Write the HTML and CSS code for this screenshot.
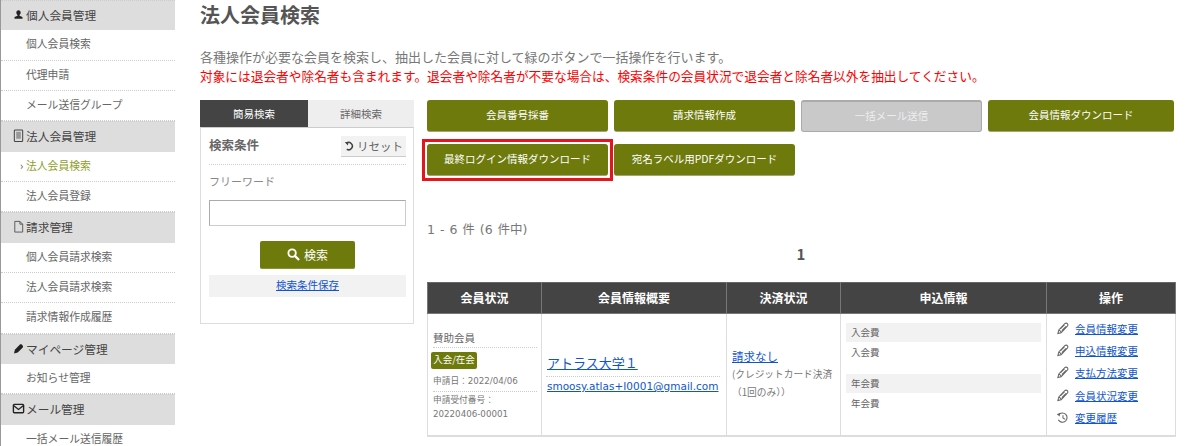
FILE: index.html
```html
<!DOCTYPE html>
<html lang="ja">
<head>
<meta charset="utf-8">
<title>法人会員検索</title>
<link rel="stylesheet" href="styles.css">
</head>
<body>
<svg width="0" height="0" class="defs">
  <symbol id="pen" viewBox="0 0 14 14"><path d="M2 12.500 3 8.500 9.500 1.800c.8-.8 2-.8 2.700 0s.7 1.900 0 2.700L5.500 11.500zM4.700 7.500l4.600-4.600M6.300 9.300l4.600-4.600M3 8.500c1 .2 2 1.500 2.500 3" fill="none" stroke="#666" stroke-width="1.100"/></symbol>
</svg>
<nav class="side">
  <div class="sh"><svg class="si" viewBox="-2 -2 18 18"><path d="M7 1c-2 0-3 1.500-3 3.300 0 1.500.7 2.700 1.600 3.300v1.200L1.500 10.500V13h11v-2.500L8.400 8.800V7.600C9.300 7 10 5.800 10 4.300 10 2.500 9 1 7 1z" fill="#222"/></svg>個人会員管理</div>
  <a class="si-row">個人会員検索</a>
  <a class="si-row">代理申請</a>
  <a class="si-row">メール送信グループ</a>
  <div class="sh"><svg class="si" viewBox="0 0 14 14"><rect x="2.500" y="1" width="9" height="12.500" rx="1" fill="none" stroke="#444" stroke-width="1.100"/><path d="M4.500 3h5v7.500h-5z" fill="#999"/></svg>法人会員管理</div>
  <a class="si-row cur">法人会員検索</a>
  <a class="si-row">法人会員登録</a>
  <div class="sh"><svg class="si" viewBox="0 0 14 14"><path d="M3 1.500h5.500L11.500 4.500v8.500H3zM8.500 1.500v3h3" fill="none" stroke="#555" stroke-width="1"/></svg>請求管理</div>
  <a class="si-row">個人会員請求検索</a>
  <a class="si-row">法人会員請求検索</a>
  <a class="si-row">請求情報作成履歴</a>
  <div class="sh"><svg class="si" viewBox="-1 -1 16 16"><path d="M1.500 13 2.500 8.500 8.500 2.500c.8-.8 2-.8 2.800 0l.7.700c.8.800.8 2 0 2.800L6 12z" fill="#222"/></svg>マイページ管理</div>
  <a class="si-row">お知らせ管理</a>
  <div class="sh"><svg class="si" viewBox="0 0 14 14"><rect x="1.500" y="2.500" width="11" height="9" rx="1" fill="none" stroke="#222" stroke-width="1.500"/><path d="M2 4l5 4 5-4" fill="none" stroke="#222" stroke-width="1.400"/></svg>メール管理</div>
  <a class="si-row">一括メール送信履歴</a>
</nav>
<main class="main">
  <h1 class="title">法人会員検索</h1>
  <p class="desc">各種操作が必要な会員を検索し、抽出した会員に対して緑のボタンで一括操作を行います。<br><span class="red">対象には退会者や除名者も含まれます。退会者や除名者が不要な場合は、検索条件の会員状況で退会者と除名者以外を抽出してください。</span></p>
  <div class="cols">
    <section class="search">
      <div class="tabs"><div class="tab on">簡易検索</div><div class="tab">詳細検索</div></div>
      <div class="panel">
        <div class="phead"><span class="ptitle">検索条件</span><span class="reset"><svg class="ri" viewBox="0 0 12 12"><path d="M2.500 2.500A4 4 0 1 1 3 9" fill="none" stroke="#444" stroke-width="1.700"/><path d="M.8 1.200 5 1 4.200 5z" fill="#444"/></svg>リセット</span></div>
        <div class="flabel">フリーワード</div>
        <div class="finput"></div>
        <div class="sbwrap"><span class="sbtn"><svg class="mag" viewBox="0 0 14 14"><circle cx="5.500" cy="5.500" r="4" fill="none" stroke="#fff" stroke-width="2"/><path d="M8.500 8.500 13 13" stroke="#fff" stroke-width="2.400"/></svg>検索</span></div>
        <div class="save"><a class="lnk">検索条件保存</a></div>
      </div>
    </section>
    <section class="right">
      <div class="btns">
        <a class="btn">会員番号採番</a>
        <a class="btn">請求情報作成</a>
        <a class="btn off">一括メール送信</a>
        <a class="btn">会員情報ダウンロード</a>
        <a class="btn mark">最終ログイン情報ダウンロード</a>
        <a class="btn">宛名ラベル用PDFダウンロード</a>
      </div>
      <div class="count">1 - 6 件 (6 件中)</div>
      <div class="pager">1</div>
      <table class="tbl">
        <colgroup><col class="c1"><col class="c2"><col class="c3"><col class="c4"><col class="c5"></colgroup>
        <thead><tr><th>会員状況</th><th>会員情報概要</th><th>決済状況</th><th>申込情報</th><th>操作</th></tr></thead>
        <tbody><tr>
          <td class="d1">
            <div class="kind">賛助会員</div>
            <div><span class="badge">入会/在会</span></div>
            <div class="meta dot">申請日：2022/04/06</div>
            <div class="meta">申請受付番号：<br>20220406-00001</div>
          </td>
          <td class="d2">
            <div class="cname"><a class="lnk">アトラス大学１</a></div>
            <div class="mail"><a class="lnk">smoosy.atlas+I0001@gmail.com</a></div>
          </td>
          <td class="d3">
            <a class="lnk pay">請求なし</a>
            <div class="paynote">(クレジットカード決済<br>（1回のみ））</div>
          </td>
          <td class="d4">
            <div class="fee">入会費</div><div class="feev">入会費</div>
            <div class="fee">年会費</div><div class="feev">年会費</div>
          </td>
          <td class="d5">
            <div class="op"><svg class="oi"><use href="#pen"/></svg><a class="lnk">会員情報変更</a></div>
            <div class="op"><svg class="oi"><use href="#pen"/></svg><a class="lnk">申込情報変更</a></div>
            <div class="op"><svg class="oi"><use href="#pen"/></svg><a class="lnk">支払方法変更</a></div>
            <div class="op"><svg class="oi"><use href="#pen"/></svg><a class="lnk">会員状況変更</a></div>
            <div class="op"><svg class="oi" viewBox="0 0 14 14"><path d="M3 4A5 5 0 1 1 2.500 9.500" fill="none" stroke="#666" stroke-width="1.200"/><path d="M.8 3.500 4.500 2 4 6z" fill="#666"/><path d="M7.500 4.500V7.500L10 9" fill="none" stroke="#666" stroke-width="1.100"/></svg><a class="lnk">変更履歴</a></div>
          </td>
        </tr></tbody>
      </table>
    </section>
  </div>
</main>
</body>
</html>
```
FILE: styles.css
```css
* { box-sizing: border-box; }
html, body { margin: 0; height: 446px; overflow: hidden; }
body {
  display: flex;
  background: #fff;
  color: #666;
  font-family: "Noto Sans CJK JP", "Liberation Sans", sans-serif;
  font-size: 12px;
}
.defs { position: absolute; }

.side {
  flex: 0 0 175px;
  border-left: 1px solid #999;
  height: 446px;
  overflow: hidden;
}
.sh {
  display: flex;
  align-items: center;
  height: 30.33px;
  background: #ddd;
  color: #444;
  font-size: 11.700px;
  padding: 0 0 2px 11px;
  border-top: 1px dotted #ccc;
}
.si { width: 13px; height: 13px; margin-right: 1px; flex: none; }
.si-row {
  display: block;
  height: 30.33px;
  line-height: 26px;
  padding-left: 25px;
  font-size: 10.800px;
  color: #666;
  border-bottom: 1px dotted #ccc;
}
.cur { color: #8f9e2a; position: relative; }
.cur::before {
  content: "›";
  position: absolute;
  left: 19px;
  color: #555;
}

.main { flex: 1; padding-left: 25px; min-width: 0; }
.title {
  margin: 0;
  padding-top: 2px;
  height: 47px;
  font-size: 20px;
  line-height: 26px;
  color: #555;
  font-weight: 700;
}
.desc { margin: 0; font-size: 13px; line-height: 19px; color: #777; height: 53px; white-space: nowrap; }
.red { color: #f00; font-size: 12.700px; }

.cols { display: flex; align-items: flex-start; }
.search { flex: 0 0 214px; margin-right: 13px; }
.tabs { display: flex; height: 27px; }
.tab { flex: 1; text-align: center; line-height: 27px; font-size: 10.500px; background: #eee; color: #666; }
.tab.on { flex: 0 0 108px; background: #444; color: #fff; }
.panel { border: 1px solid #ddd; border-top-color: #ccc; height: 197px; padding: 8px 7px 0 8px; }
.phead { display: flex; justify-content: space-between; align-items: center; height: 21px; }
.ptitle { font-size: 12.500px; font-weight: 700; color: #666; padding-bottom: 4px; }
.reset {
  display: flex; align-items: center;
  height: 21px;
  width: 65px;
  justify-content: center;
  background: #f2f2f2;
  border-bottom: 1px solid #ccc;
  font-size: 11.500px;
  color: #666;
}
.ri { width: 11px; height: 11px; margin-right: 2px; }
.flabel { margin-top: 7px; padding-top: 8px; border-top: 1px dotted #ccc; font-size: 11px; line-height: 17px; color: #888; }
.finput { margin-top: 10px; height: 26px; border: 1px solid #aaa; border-bottom-color: #ccc; border-right-color: #ccc; }
.sbwrap { margin-top: 15px; display: flex; justify-content: center; }
.sbtn {
  display: flex; align-items: center; justify-content: center;
  width: 95px; height: 28px;
  background: #6e7a0c;
  border-bottom: 1px solid #8a9430;
  border-radius: 2px;
  color: #fff;
  font-size: 12px;
}
.mag { width: 13px; height: 13px; margin-right: 4px; }
.save { margin-top: 6px; height: 22px; line-height: 20px; background: #f2f2f2; text-align: center; font-size: 10.500px; }
.lnk { color: #1155cc; text-decoration: underline; }

.right { width: 748px; }
.btns { display: grid; grid-template-columns: 181px 181px 181px 186px; gap: 12px 6px; }
.btn {
  height: 32px;
  line-height: 30px;
  text-align: center;
  background: #6e7a0c;
  border-bottom: 1px solid #a0a67a;
  border-radius: 3px;
  color: #fff;
  font-size: 10.500px;
}
.off { background: #c9c9c9; border: 1px solid #aaa; border-top-width: 2px; color: #eee; line-height: 27px; }
.mark { position: relative; }
.mark::after {
  content: "";
  position: absolute;
  left: -5px; right: -5px; top: -5px; bottom: -6px;
  border: 3px solid #e8141c;
}
.count { margin-top: 45px; font-family: "DejaVu Sans", "Noto Sans CJK JP", sans-serif; font-size: 12.500px; word-spacing: 1px; line-height: 18px; color: #777; }
.pager { margin-top: 4px; height: 22px; text-align: center; font-size: 15px; font-weight: 700; line-height: 22px; color: #555; }
.tbl { margin-top: 17px; width: 748px; table-layout: fixed; border-collapse: collapse; }
.c1 { width: 114px; } .c2 { width: 185px; } .c3 { width: 114px; } .c4 { width: 206px; } .c5 { width: 129px; }
.tbl th {
  height: 31px;
  padding: 0 0 1px;
  background: #444;
  color: #fff;
  font-size: 12px;
  font-weight: 700;
  border: 1px solid #777;
  border-top-color: #666;
}
.tbl td { height: 122px; padding: 0; border: 1px solid #ddd; border-bottom-width: 2px; }
.d1 { padding: 0 4px 0 5px !important; vertical-align: top; }
.kind { margin-top: 14px; height: 20px; line-height: 20px; border-bottom: 1px dotted #ccc; font-size: 10.500px; }
.badge {
  display: block;
  width: 46px; height: 17px;
  margin: 4px 0 0 -2px;
  line-height: 15px;
  text-align: center;
  background: #6e7a0c;
  border-radius: 2px;
  color: #fff;
  font-size: 9.500px;
}
.meta { font-family: "DejaVu Sans", "Noto Sans CJK JP", sans-serif; font-size: 8.700px; line-height: 14px; color: #777; }
.meta.dot { margin-top: 3px; padding: 2px 0 3px; border-bottom: 1px dotted #ccc; }
.meta:last-child { padding-top: 1px; }
.d2 { padding: 34px 6px 0 4px !important; vertical-align: top; }
.d2 .cname { padding-left: 1px; }
.cname { font-size: 13px; line-height: 20px; height: 29px; padding-top: 5px; border-bottom: 1px dotted #ccc; }
.mail { padding-left: 1px; font-family: "DejaVu Sans", "Noto Sans CJK JP", sans-serif; font-size: 10.500px; line-height: 18px; white-space: nowrap; }
.d3 { padding: 0 0 0 5px !important; vertical-align: middle; font-size: 9.700px; }
.pay { font-size: 11.500px; line-height: 18px; display: inline-block; }
.paynote { line-height: 18px; color: #777; text-align: left; white-space: nowrap; }
.d4 { padding: 9px 5px 0 !important; vertical-align: top; }
.fee { height: 19px; line-height: 18px; padding-left: 5px; background: #f2f2f2; font-size: 9.500px; }
.feev { height: 32px; line-height: 20px; padding-left: 5px; font-size: 9.500px; }
.d5 { padding: 3px 0 0 9px !important; vertical-align: top; }
.op { display: flex; align-items: center; height: 22.300px; font-size: 10.500px; }
.oi { width: 13px; height: 13px; margin-right: 6px; flex: none; }
```
